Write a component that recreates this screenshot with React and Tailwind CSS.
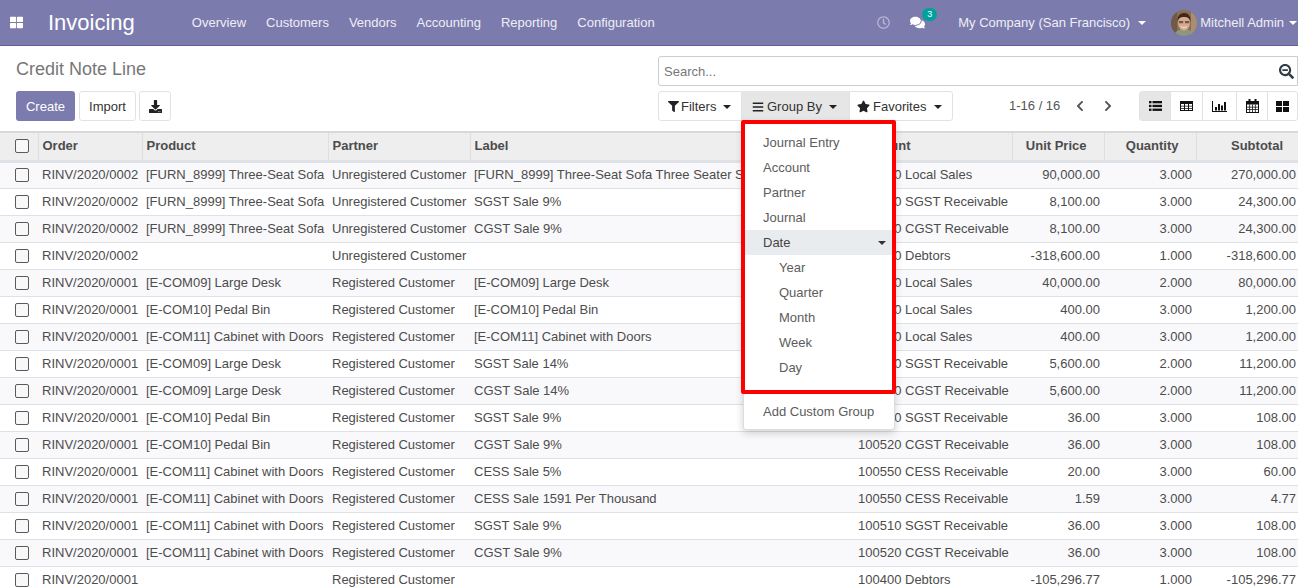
import { FaThLarge, FaFilter, FaBars, FaStar, FaDownload, FaSearchMinus, FaComments, FaRegClock, FaChevronLeft, FaChevronRight } from 'react-icons/fa'

const NAV = ['Overview', 'Customers', 'Vendors', 'Accounting', 'Reporting', 'Configuration']

const SOFA = '[FURN_8999] Three-Seat Sofa'
const DESK = '[E-COM09] Large Desk'
const BIN = '[E-COM10] Pedal Bin'
const CAB = '[E-COM11] Cabinet with Doors'
const UNREG = 'Unregistered Customer'
const REG = 'Registered Customer'
const R1 = 'RINV/2020/0001'
const R2 = 'RINV/2020/0002'

const ROWS = [
  [R2, SOFA, UNREG, '[FURN_8999] Three-Seat Sofa Three Seater Sofa with Lounger in Steel Grey Colour', '200000 Local Sales', '90,000.00', '3.000', '270,000.00'],
  [R2, SOFA, UNREG, 'SGST Sale 9%', '100510 SGST Receivable', '8,100.00', '3.000', '24,300.00'],
  [R2, SOFA, UNREG, 'CGST Sale 9%', '100520 CGST Receivable', '8,100.00', '3.000', '24,300.00'],
  [R2, '', UNREG, '', '100400 Debtors', '-318,600.00', '1.000', '-318,600.00'],
  [R1, DESK, REG, DESK, '200000 Local Sales', '40,000.00', '2.000', '80,000.00'],
  [R1, BIN, REG, BIN, '200000 Local Sales', '400.00', '3.000', '1,200.00'],
  [R1, CAB, REG, CAB, '200000 Local Sales', '400.00', '3.000', '1,200.00'],
  [R1, DESK, REG, 'SGST Sale 14%', '100510 SGST Receivable', '5,600.00', '2.000', '11,200.00'],
  [R1, DESK, REG, 'CGST Sale 14%', '100520 CGST Receivable', '5,600.00', '2.000', '11,200.00'],
  [R1, BIN, REG, 'SGST Sale 9%', '100510 SGST Receivable', '36.00', '3.000', '108.00'],
  [R1, BIN, REG, 'CGST Sale 9%', '100520 CGST Receivable', '36.00', '3.000', '108.00'],
  [R1, CAB, REG, 'CESS Sale 5%', '100550 CESS Receivable', '20.00', '3.000', '60.00'],
  [R1, CAB, REG, 'CESS Sale 1591 Per Thousand', '100550 CESS Receivable', '1.59', '3.000', '4.77'],
  [R1, CAB, REG, 'SGST Sale 9%', '100510 SGST Receivable', '36.00', '3.000', '108.00'],
  [R1, CAB, REG, 'CGST Sale 9%', '100520 CGST Receivable', '36.00', '3.000', '108.00'],
  [R1, '', REG, '', '100400 Debtors', '-105,296.77', '1.000', '-105,296.77'],
]

const Caret = ({ className = 'border-t-[#fff]' }) => (
  <span className={`inline-block w-0 h-0 border-x-[4px] border-x-transparent border-t-[4px] ${className}`} />
)

const Check = () => (
  <span className="block w-[14px] h-[14px] rounded-[2px] border-[1.5px] border-[#5a5a5a] bg-[#f8f8f8]" />
)

const Face = () => (
  <svg viewBox="0 0 26 26" className="w-[26px] h-[26px] rounded-full shrink-0">
    <rect width="26" height="26" fill="#8d6d4e" />
    <rect x="0" y="0" width="6" height="26" fill="#6f5a45" />
    <rect x="20" y="0" width="6" height="26" fill="#a98f72" />
    <path d="M3 26c1-5 5-7 10-7s9 2 10 7z" fill="#8b9780" />
    <ellipse cx="13" cy="13" rx="6" ry="7.500" fill="#d9a98c" />
    <path d="M6.500 11.500C6 5 10 3 13.500 3S20 6 19.500 11.500c-1-3.500-3-4.500-6.500-4.500s-5.500 1-6.500 4.500z" fill="#3a2b20" />
    <path d="M8 11h4.200v2.300H8zM14 11h4.200v2.300H14z" fill="#6d5a4e" />
    <path d="M10 16.500c2 1.500 4 1.500 6 0" stroke="#f4e8e0" strokeWidth="1" fill="none" />
  </svg>
)

const ListIcon = () => (
  <svg viewBox="0 0 13 10" className="w-[13px] h-[10px]" fill="#111">
    <rect x="0" y="0" width="2.500" height="2.300" />
    <rect x="0" y="3.800" width="2.500" height="2.300" />
    <rect x="0" y="7.600" width="2.500" height="2.300" />
    <rect x="3.500" y="0" width="9.500" height="2.300" />
    <rect x="3.500" y="3.800" width="9.500" height="2.300" />
    <rect x="3.500" y="7.600" width="9.500" height="2.300" />
  </svg>
)

const GridIcon = () => (
  <svg viewBox="0 0 13 10" className="w-[13px] h-[10px]" fill="#111">
    <path d="M0 0h13v10H0zM1 3v1.700h3V3zm4 0v1.700h3V3zm4 0v1.700h3V3zM1 5.500v1.500h3V5.500zm4 0v1.500h3V5.500zm4 0v1.500h3V5.500zM1 7.800V9h3V7.800zm4 0V9h3V7.800zm4 0V9h3V7.800z" fillRule="evenodd" />
  </svg>
)

const ChartIcon = () => (
  <svg viewBox="0 0 15 11" className="w-[15px] h-[11px]" fill="#111">
    <path d="M0 0h1v10h14v1H0z" />
    <rect x="3" y="6" width="2" height="3.500" />
    <rect x="6" y="3" width="2" height="6.500" />
    <rect x="9" y="4.500" width="2" height="5" />
    <rect x="12" y="1" width="2" height="8.500" />
  </svg>
)

const CalendarIcon = () => (
  <svg viewBox="0 0 13 14" className="w-[13px] h-[14px]" fill="#111">
    <path d="M0 2h13v12H0zM1 5.500v7.500h11V5.500z" fillRule="evenodd" />
    <rect x="2.500" y="0" width="2" height="3.500" />
    <rect x="8.500" y="0" width="2" height="3.500" />
    <path d="M3.300 5.500h.8V13h-.8zM6.100 5.500h.8V13h-.8zM8.900 5.500h.8V13h-.8zM1 7.700h11v.8H1zM1 10.200h11v.8H1z" />
  </svg>
)

const KanbanIcon = () => (
  <svg viewBox="0 0 13 11" className="w-[13px] h-[11px]" fill="#111">
    <rect x="0" y="0" width="6" height="5" />
    <rect x="7" y="0" width="6" height="5" />
    <rect x="0" y="6" width="6" height="5" />
    <rect x="7" y="6" width="6" height="5" />
  </svg>
)

const GROUPS = ['Journal Entry', 'Account', 'Partner', 'Journal']
const PERIODS = ['Year', 'Quarter', 'Month', 'Week', 'Day']

function GroupMenu() {
  return (
    <div className="absolute left-[1px] top-0 z-20 w-[152px] h-[309px] bg-white rounded-b-[3px] border-x border-b border-[#ddd] shadow-[0_3px_8px_rgba(0,0,0,0.18)] text-[#5c5c5c]">
      <div className="-mt-px -ml-[3px] -mr-[2px] border-[4px] border-[#f00] rounded-[2px] pt-[6px] pb-[10px]">
        {GROUPS.map((g) => (
          <div key={g} className="h-[25px] leading-[25px] pl-[18px]">{g}</div>
        ))}
        <div className="h-[25px] leading-[25px] pl-[18px] pr-[6px] bg-[#e9ecef] text-[#444] flex items-center justify-between">
          Date
          <Caret className="border-t-[#333]" />
        </div>
        {PERIODS.map((p) => (
          <div key={p} className="h-[25px] leading-[25px] pl-[34px]">{p}</div>
        ))}
      </div>
      <div className="h-[25px] leading-[25px] pl-[19px] mt-[5px]">Add Custom Group</div>
    </div>
  )
}

export default function App() {
  return (
    <div className="w-[1298px] h-[588px] overflow-hidden bg-white text-[13px] text-[#4c4c4c] font-['Liberation_Sans',Arial,sans-serif]">
      {/* navbar */}
      <div className="h-[46px] bg-[#7c7bad] border-b border-[#5f5e97] flex items-center text-white">
        <FaThLarge className="ml-[10px] text-[13px]" />
        <span className="ml-[25px] text-[22px] leading-none">Invoicing</span>
        <div className="ml-[57px] flex gap-5 text-[#eeeef6]">
          {NAV.map((n) => <span key={n}>{n}</span>)}
        </div>
        <div className="ml-auto flex items-center text-[#eeeef6]">
          <FaRegClock className="text-[13px] text-[#b9b8d4]" />
          <span className="relative ml-[20px] mr-[33px]">
            <FaComments className="text-[15px] text-white" />
            <span className="absolute -top-[7px] left-[12px] w-[15px] h-[13px] rounded-full bg-[#00a09d] text-[9px] leading-[13px] text-center text-white">3</span>
          </span>
          <span>My Company (San Francisco)</span>
          <Caret className="ml-[8px] border-t-[#fff]" />
          <span className="ml-[25px]"><Face /></span>
          <span className="ml-[3px]">Mitchell Admin</span>
          <Caret className="ml-[5px] mr-[1px] border-t-[#fff]" />
        </div>
      </div>

      {/* control panel */}
      <div className="h-[85px] flex justify-between pl-[16px]">
        <div>
          <div className="mt-[12px] text-[18px] leading-[22px] text-[#777]">Credit Note Line</div>
          <div className="mt-[11px] flex">
            <button className="w-[59px] h-[30px] pt-px rounded-[3px] bg-[#7c7bad] text-white">Create</button>
            <button className="ml-[4px] w-[57px] h-[30px] pt-px rounded-[3px] bg-white border border-[#e2e2e2] text-[#333]">Import</button>
            <button className="ml-[3px] w-[32px] h-[30px] rounded-[3px] bg-white border border-[#e2e2e2] text-[#222] flex items-center justify-center">
              <FaDownload className="text-[13px]" />
            </button>
          </div>
        </div>
        <div className="w-[640px]">
          <div className="mt-[10px] h-[30px] pt-px border border-[#ccc] rounded-l-[3px] flex items-center justify-between pl-[5px] pr-[3px]">
            <span className="text-[#777]">Search...</span>
            <FaSearchMinus className="text-[15px] text-[#2f3b45]" />
          </div>
          <div className="mt-[5px] flex items-center text-[#333]">
            <div className="h-[30px] w-[84px] pt-px shrink-0 border border-[#e2e2e2] rounded-l-[3px] flex items-center pl-[9px]">
              <FaFilter className="text-[11px] text-[#222]" />
              <span className="ml-[2px]">Filters</span>
              <Caret className="ml-[7px] border-t-[#222]" />
            </div>
            <div className="relative shrink-0">
              <div className="h-[30px] w-[107px] pt-px bg-[#e6e6e6] flex items-center pl-[10px]">
                <FaBars className="text-[12px] text-[#222]" />
                <span className="ml-[3px]">Group By</span>
                <Caret className="ml-[7px] border-t-[#222]" />
              </div>
              <div className="absolute left-0 top-[30px]"><GroupMenu /></div>
            </div>
            <div className="h-[30px] w-[104px] pt-px shrink-0 border border-[#e2e2e2] rounded-r-[3px] flex items-center pl-[7px]">
              <FaStar className="text-[13px] text-[#222]" />
              <span className="ml-[3px]">Favorites</span>
              <Caret className="ml-[8px] border-t-[#222]" />
            </div>
            <span className="ml-[56px] text-[#555] whitespace-nowrap">1-16 / 16</span>
            <FaChevronLeft className="ml-[14px] text-[12px] text-[#555] shrink-0" />
            <FaChevronRight className="ml-[16px] text-[12px] text-[#555] shrink-0" />
            <div className="ml-auto flex h-[30px] text-[#111] border border-[#e2e2e2] rounded-[3px]">
              <span className="w-[31px] bg-[#e6e6e6] border-r border-[#e2e2e2] flex items-center justify-center"><ListIcon /></span>
              <span className="w-[32px] border-r border-[#e2e2e2] flex items-center justify-center"><GridIcon /></span>
              <span className="w-[34px] border-r border-[#e2e2e2] flex items-center justify-center"><ChartIcon /></span>
              <span className="w-[31px] border-r border-[#e2e2e2] flex items-center justify-center"><CalendarIcon /></span>
              <span className="w-[29px] flex items-center justify-center"><KanbanIcon /></span>
            </div>
          </div>
        </div>
      </div>

      {/* list */}
      <table className="w-[1298px] table-fixed border-collapse">
        <colgroup>
          <col className="w-[38px]" />
          <col className="w-[104px]" />
          <col className="w-[186px]" />
          <col className="w-[142px]" />
          <col className="w-[384px]" />
          <col className="w-[158px]" />
          <col className="w-[92px]" />
          <col className="w-[92px]" />
          <col className="w-[102px]" />
        </colgroup>
        <thead>
          <tr className="h-[29px] bg-[#eeeeee] border-t-2 border-b-[3px] border-t-[#d8d8d8] border-b-[#dee2e6] font-bold">
            <th className="pl-[15px]"><Check /></th>
            {['Order', 'Product', 'Partner', 'Label', 'Account'].map((h) => (
              <th key={h} className="text-left pl-[4px] pb-[2px] border-l border-[#dedede]">{h}</th>
            ))}
            {['Unit Price', 'Quantity'].map((h) => (
              <th key={h} className="text-right pr-[17px] pb-[2px] border-l border-[#dedede]">{h}</th>
            ))}
            <th className="text-right pr-[15px] pb-[2px] border-l border-[#dedede]">Subtotal</th>
          </tr>
        </thead>
        <tbody>
          {ROWS.map((r, i) => (
            <tr key={i} className={`h-[27px] border-b border-[#dee2e6] ${i % 2 === 0 ? 'bg-[#f9f9fb]' : 'bg-white'}`}>
              <td className="pl-[15px]"><Check /></td>
              {r.slice(0, 5).map((c, j) => (
                <td key={j} className={`whitespace-nowrap overflow-hidden text-clip ${j === 4 ? 'pl-[4px]' : 'pl-[4px] pr-[3px]'}`}>{c}</td>
              ))}
              {r.slice(5, 7).map((c, j) => (
                <td key={j} className="text-right pr-[4px] whitespace-nowrap">{c}</td>
              ))}
              <td className="text-right pr-[2px] whitespace-nowrap">{r[7]}</td>
            </tr>
          ))}
        </tbody>
      </table>
    </div>
  )
}
